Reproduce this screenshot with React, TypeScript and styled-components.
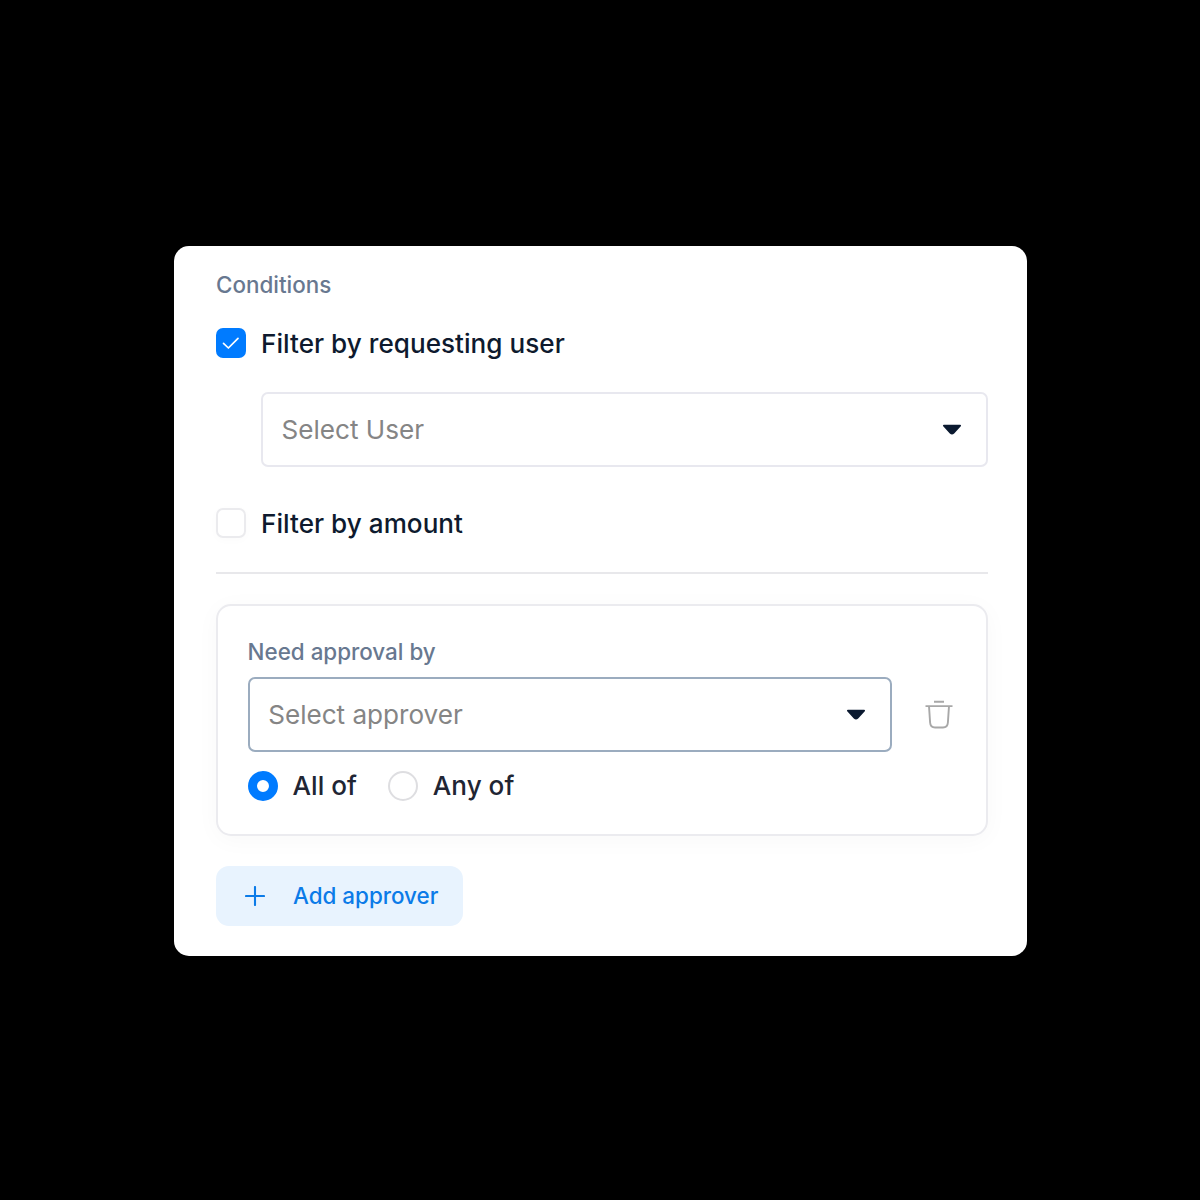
import React, { useState } from "react";
import styled, { createGlobalStyle } from "styled-components";

const GlobalStyle = createGlobalStyle`
  *, *::before, *::after { box-sizing: border-box; }
  body {
    margin: 0;
    background: #000;
    font-family: Inter, "Liberation Sans", sans-serif;
  }
`;

const Page = styled.main`
  height: 1200px;
  display: flex;
  justify-content: center;
  align-items: flex-start;
  padding: 245.5px 0 0 1.8px;
`;

const Panel = styled.section`
  width: 853px;
  height: 710.5px;
  padding: 24.5px 39.4px 30px 41.6px;
  background: #fff;
  border-radius: 15px;
  display: flex;
  flex-direction: column;
`;

const Caption = styled.div`
  font-size: 22.4px;
  line-height: 30px;
  font-weight: 500;
  color: #687890;
`;

const CheckRow = styled.label<{ $top: number }>`
  display: flex;
  align-items: center;
  gap: 15px;
  height: 30px;
  margin-top: ${(p) => p.$top}px;
  font-size: 26.1px;
  font-weight: 500;
  letter-spacing: 0.03px;
  color: #0e1a2e;
  white-space: nowrap;
`;

const CheckBox = styled.span<{ $on: boolean }>`
  width: 30px;
  height: 30px;
  flex: none;
  display: grid;
  place-items: center;
  border-radius: 7px;
  background: ${(p) => (p.$on ? "#007bff" : "#fff")};
  border: ${(p) => (p.$on ? "none" : "2px solid #ebebee")};
  box-shadow: ${(p) => (p.$on ? "none" : "0 2px 10px rgba(0, 0, 0, 0.02)")};
`;

const HiddenInput = styled.input`
  appearance: none;
  position: absolute;
  margin: 0;
  width: 0;
  height: 0;
`;

const SelectBox = styled.button<{ $strong?: boolean }>`
  flex: 1;
  height: 75px;
  padding: 0 24px 0 18.6px;
  display: flex;
  align-items: center;
  justify-content: space-between;
  border: 2px solid ${(p) => (p.$strong ? "#9bacbf" : "#e8e8ef")};
  border-radius: 7px;
  background: #fff;
  color: #858585;
  font: 400 26.1px Inter, "Liberation Sans", sans-serif;
`;

const UserField = styled.div`
  display: flex;
  margin: 34px 0 0 45px;
`;

const Divider = styled.hr`
  width: 100%;
  height: 2px;
  margin: 34px 0 30px;
  border: 0;
  background: #e8e8eb;
`;

const Card = styled.div`
  height: 232px;
  padding: 31px 30px 29px 29.6px;
  border: 2px solid #ebebef;
  border-radius: 15px;
  background: #fff;
  box-shadow: 0 4px 24px rgba(15, 23, 42, 0.03);
`;

const ApproverRow = styled.div`
  display: flex;
  align-items: center;
  gap: 33px;
  margin-top: 10px;
`;

const IconButton = styled.button`
  width: 28px;
  height: 30px;
  margin-right: 3px;
  padding: 0;
  border: 0;
  background: none;
  display: flex;
`;

const Radios = styled.div`
  display: flex;
  gap: 31px;
  margin-top: 18.5px;
`;

const RadioLabel = styled.label`
  display: flex;
  align-items: center;
  gap: 15px;
  height: 30px;
  font-size: 26.1px;
  font-weight: 500;
  color: #212533;
`;

const Radio = styled.span<{ $on: boolean }>`
  width: 30px;
  height: 30px;
  border-radius: 50%;
  background: #fff;
  border: ${(p) => (p.$on ? "9px solid #007bff" : "2px solid #dedee1")};
`;

const AddButton = styled.button`
  align-self: flex-start;
  width: 247px;
  height: 60px;
  margin-top: 30px;
  padding: 0 0 0 29px;
  display: flex;
  align-items: center;
  gap: 28px;
  border: 0;
  border-radius: 13px;
  background: #e8f3fe;
  color: #0b7be8;
  font: 500 22.4px Inter, "Liberation Sans", sans-serif;
  white-space: nowrap;
`;

const ButtonText = styled.span`
  padding-bottom: 2px;
`;

const Caret = () => (
  <svg width="20" height="12" viewBox="0 0 20 12">
    <path d="M1.900 1.700H18.100L11.500 8.900Q10 10.300 8.500 8.900Z" fill="#0b1a30" stroke="#0b1a30" strokeWidth="1.900" strokeLinejoin="round" />
  </svg>
);

const Check = () => (
  <svg width="20" height="16" viewBox="0 0 20 16" fill="none">
    <path d="M2.500 8.400L7.400 13L17 3.300" stroke="#fff" strokeWidth="1.700" strokeLinecap="round" strokeLinejoin="round" />
  </svg>
);

const Trash = () => (
  <svg width="28" height="30" viewBox="0 0 28 30" fill="none" stroke="#a8a8a8" strokeWidth="1.900">
    <path d="M9 1.700H19M0.500 6.100H27.500" />
    <path d="M4 6.100L5.100 22.500Q5.400 27.500 10 27.500H18Q22.600 27.500 22.900 22.500L24 6.100" />
  </svg>
);

const Plus = () => (
  <svg width="20" height="20" viewBox="0 0 20 20" stroke="#0b7be8" strokeWidth="2.100" strokeLinecap="round">
    <path d="M10 1V19M1 10H19" />
  </svg>
);

interface FilterProps {
  label: string;
  initial: boolean;
  top: number;
}

function Filter({ label, initial, top }: FilterProps) {
  const [on, setOn] = useState(initial);
  return (
    <CheckRow $top={top}>
      <HiddenInput type="checkbox" checked={on} onChange={() => setOn(!on)} />
      <CheckBox $on={on}>{on && <Check />}</CheckBox>
      {label}
    </CheckRow>
  );
}

export default function App() {
  const [mode, setMode] = useState("All of");
  return (
    <Page>
      <GlobalStyle />
      <Panel>
        <Caption>Conditions</Caption>
        <Filter label="Filter by requesting user" initial top={28} />
        <UserField>
          <SelectBox>
            Select User
            <Caret />
          </SelectBox>
        </UserField>
        <Filter label="Filter by amount" initial={false} top={41} />
        <Divider />
        <Card>
          <Caption>Need approval by</Caption>
          <ApproverRow>
            <SelectBox $strong>
              Select approver
              <Caret />
            </SelectBox>
            <IconButton aria-label="Remove">
              <Trash />
            </IconButton>
          </ApproverRow>
          <Radios>
            {["All of", "Any of"].map((name) => (
              <RadioLabel key={name}>
                <HiddenInput type="radio" name="mode" checked={mode === name} onChange={() => setMode(name)} />
                <Radio $on={mode === name} />
                {name}
              </RadioLabel>
            ))}
          </Radios>
        </Card>
        <AddButton>
          <Plus />
          <ButtonText>Add approver</ButtonText>
        </AddButton>
      </Panel>
    </Page>
  );
}
